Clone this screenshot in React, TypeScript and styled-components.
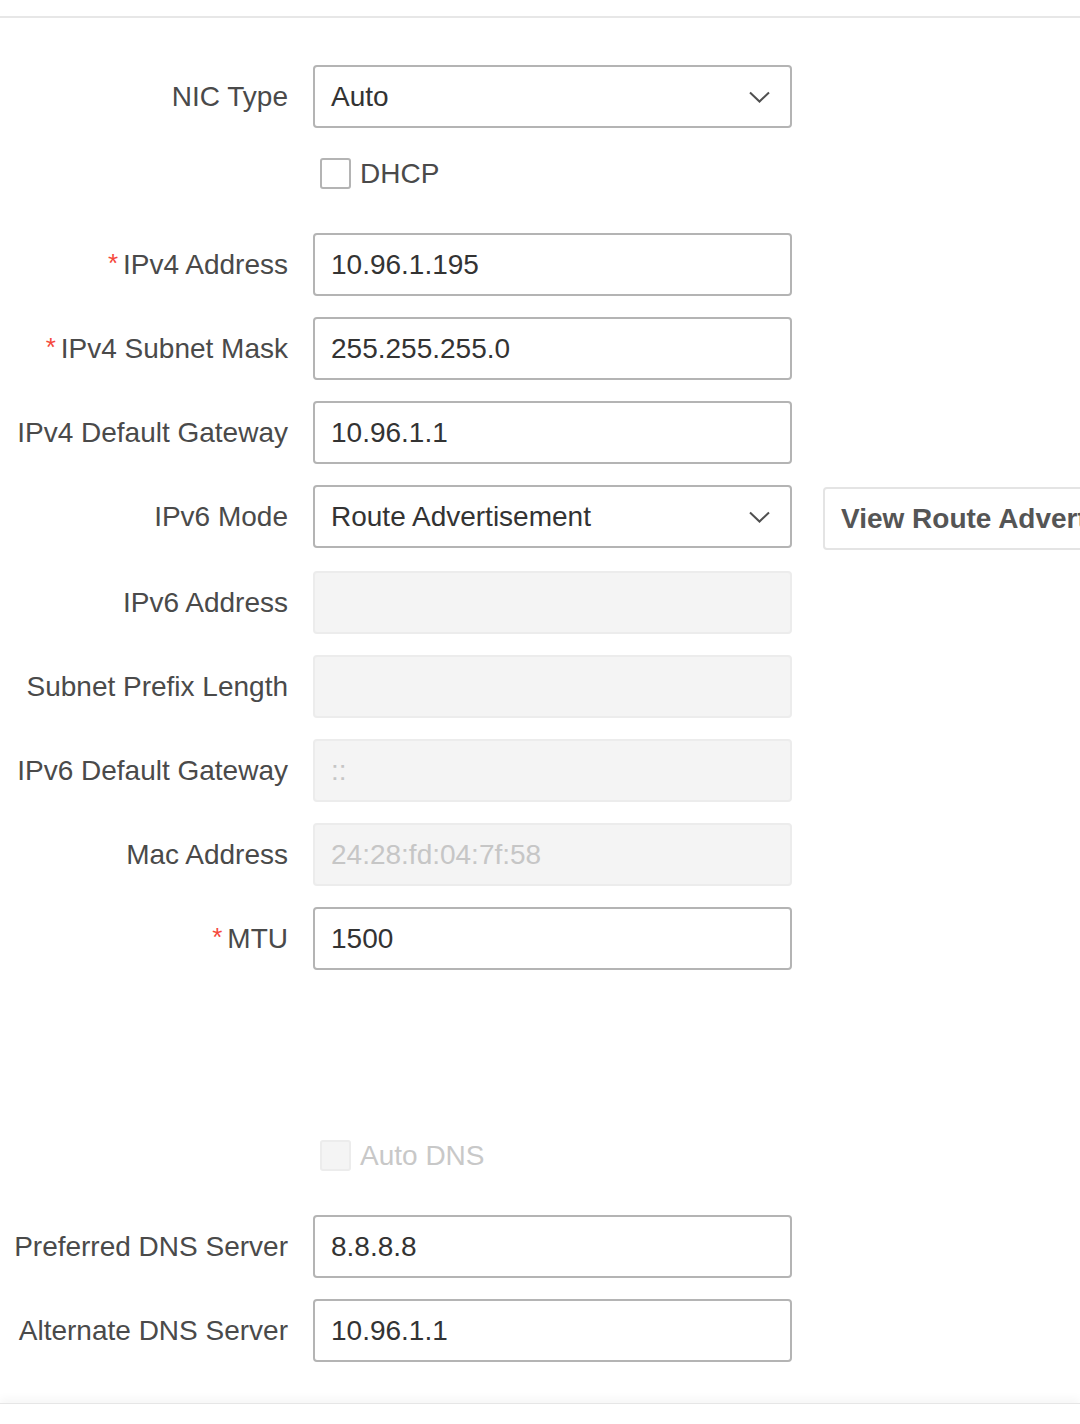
import styled, { createGlobalStyle } from 'styled-components';

const GlobalStyle = createGlobalStyle`
  html, body {
    margin: 0;
    padding: 0;
    background: #fff;
    overflow: hidden;
  }

  body {
    font-family: 'Liberation Sans', Arial, sans-serif;
    font-size: 28px;
    color: #4a4a4a;
  }
`;

const Page = styled.div`
  width: 1080px;
  height: 1424px;
  overflow: hidden;
  display: flex;
  flex-direction: column;
`;

const TopRule = styled.div`
  margin-top: 16px;
  height: 2px;
  background: #e7e7e7;
`;

const Form = styled.form`
  padding-top: 47px;
  display: flex;
  flex-direction: column;
  gap: 21px;
`;

const Row = styled.div`
  display: flex;
  align-items: flex-start;
  min-height: 63px;
`;

const Label = styled.label`
  width: 288px;
  height: 63px;
  line-height: 63px;
  flex-shrink: 0;
  text-align: right;
  color: #4a4a4a;
  white-space: nowrap;
`;

const Required = styled.span`
  color: #f5483b;
  margin-right: 5px;
  font-size: 26px;
  position: relative;
  top: -2px;
`;

const Field = styled.div<{ $disabled?: boolean }>`
  margin-left: 25px;
  width: 479px;
  height: 63px;
  box-sizing: border-box;
  flex-shrink: 0;
  display: flex;
  align-items: center;
  justify-content: space-between;
  padding: 0 20px 0 16px;
  border: 2px solid ${(p) => (p.$disabled ? '#ececec' : '#b4b4b4')};
  border-radius: 4px;
  background: ${(p) => (p.$disabled ? '#f4f4f4' : '#fff')};
  color: ${(p) => (p.$disabled ? '#c6c6c6' : '#333')};
`;

const CheckRow = styled.div<{ $disabled?: boolean }>`
  display: flex;
  align-items: center;
  height: 63px;
  box-sizing: border-box;
  padding: 0 0 14px 320px;
  gap: 9px;
  color: ${(p) => (p.$disabled ? '#c8c8c8' : '#4a4a4a')};
`;

const Box = styled.span<{ $disabled?: boolean }>`
  width: 31px;
  height: 31px;
  box-sizing: border-box;
  border: 2px solid ${(p) => (p.$disabled ? '#ececec' : '#b4b4b4')};
  background: ${(p) => (p.$disabled ? '#f4f4f4' : '#fff')};
  border-radius: 3px;
`;

const Spacer = styled.div`
  height: 119px;
`;

const SideButton = styled.button`
  margin-left: 31px;
  margin-top: 2px;
  height: 63px;
  flex-shrink: 0;
  padding: 0 16px;
  border: 2px solid #e4e4e4;
  border-radius: 4px;
  background: #fff;
  font-family: 'Liberation Sans', Arial, sans-serif;
  font-size: 28px;
  font-weight: bold;
  color: #555;
  white-space: nowrap;
`;

const Footer = styled.div`
  margin-top: 41px;
  height: 20px;
  border-top: 1px solid #e6e6e6;
  box-shadow: 0 -5px 8px rgba(0, 0, 0, 0.035);
`;

function Chevron() {
  return (
    <svg width="21" height="12" viewBox="0 0 21 12" fill="none">
      <path d="M1 1.5 L10.5 10.5 L20 1.5" stroke="#505050" strokeWidth="2" />
    </svg>
  );
}

type FieldRow = {
  label: string;
  value?: string;
  required?: boolean;
  disabled?: boolean;
  select?: boolean;
};

function InputRow({ label, value, required, disabled, select, children }: FieldRow & { children?: React.ReactNode }) {
  return (
    <Row>
      <Label>
        {required && <Required>*</Required>}
        {label}
      </Label>
      <Field $disabled={disabled}>
        <span>{value}</span>
        {select && <Chevron />}
      </Field>
      {children}
    </Row>
  );
}

export default function App() {
  const ipRows: FieldRow[] = [
    { label: 'IPv4 Address', value: '10.96.1.195', required: true },
    { label: 'IPv4 Subnet Mask', value: '255.255.255.0', required: true },
    { label: 'IPv4 Default Gateway', value: '10.96.1.1' },
  ];

  const ipv6Rows: FieldRow[] = [
    { label: 'IPv6 Address', value: '', disabled: true },
    { label: 'Subnet Prefix Length', value: '', disabled: true },
    { label: 'IPv6 Default Gateway', value: '::', disabled: true },
    { label: 'Mac Address', value: '24:28:fd:04:7f:58', disabled: true },
    { label: 'MTU', value: '1500', required: true },
  ];

  const dnsRows: FieldRow[] = [
    { label: 'Preferred DNS Server', value: '8.8.8.8' },
    { label: 'Alternate DNS Server', value: '10.96.1.1' },
  ];

  return (
    <Page>
      <GlobalStyle />
      <TopRule />
      <Form>
        <InputRow label="NIC Type" value="Auto" select />
        <CheckRow>
          <Box />
          DHCP
        </CheckRow>
        {ipRows.map((row) => (
          <InputRow key={row.label} {...row} />
        ))}
        <InputRow label="IPv6 Mode" value="Route Advertisement" select>
          <SideButton type="button">View Route Advertisement</SideButton>
        </InputRow>
        {ipv6Rows.map((row) => (
          <InputRow key={row.label} {...row} />
        ))}
        <Spacer />
        <CheckRow $disabled>
          <Box $disabled />
          Auto DNS
        </CheckRow>
        {dnsRows.map((row) => (
          <InputRow key={row.label} {...row} />
        ))}
      </Form>
      <Footer />
    </Page>
  );
}
